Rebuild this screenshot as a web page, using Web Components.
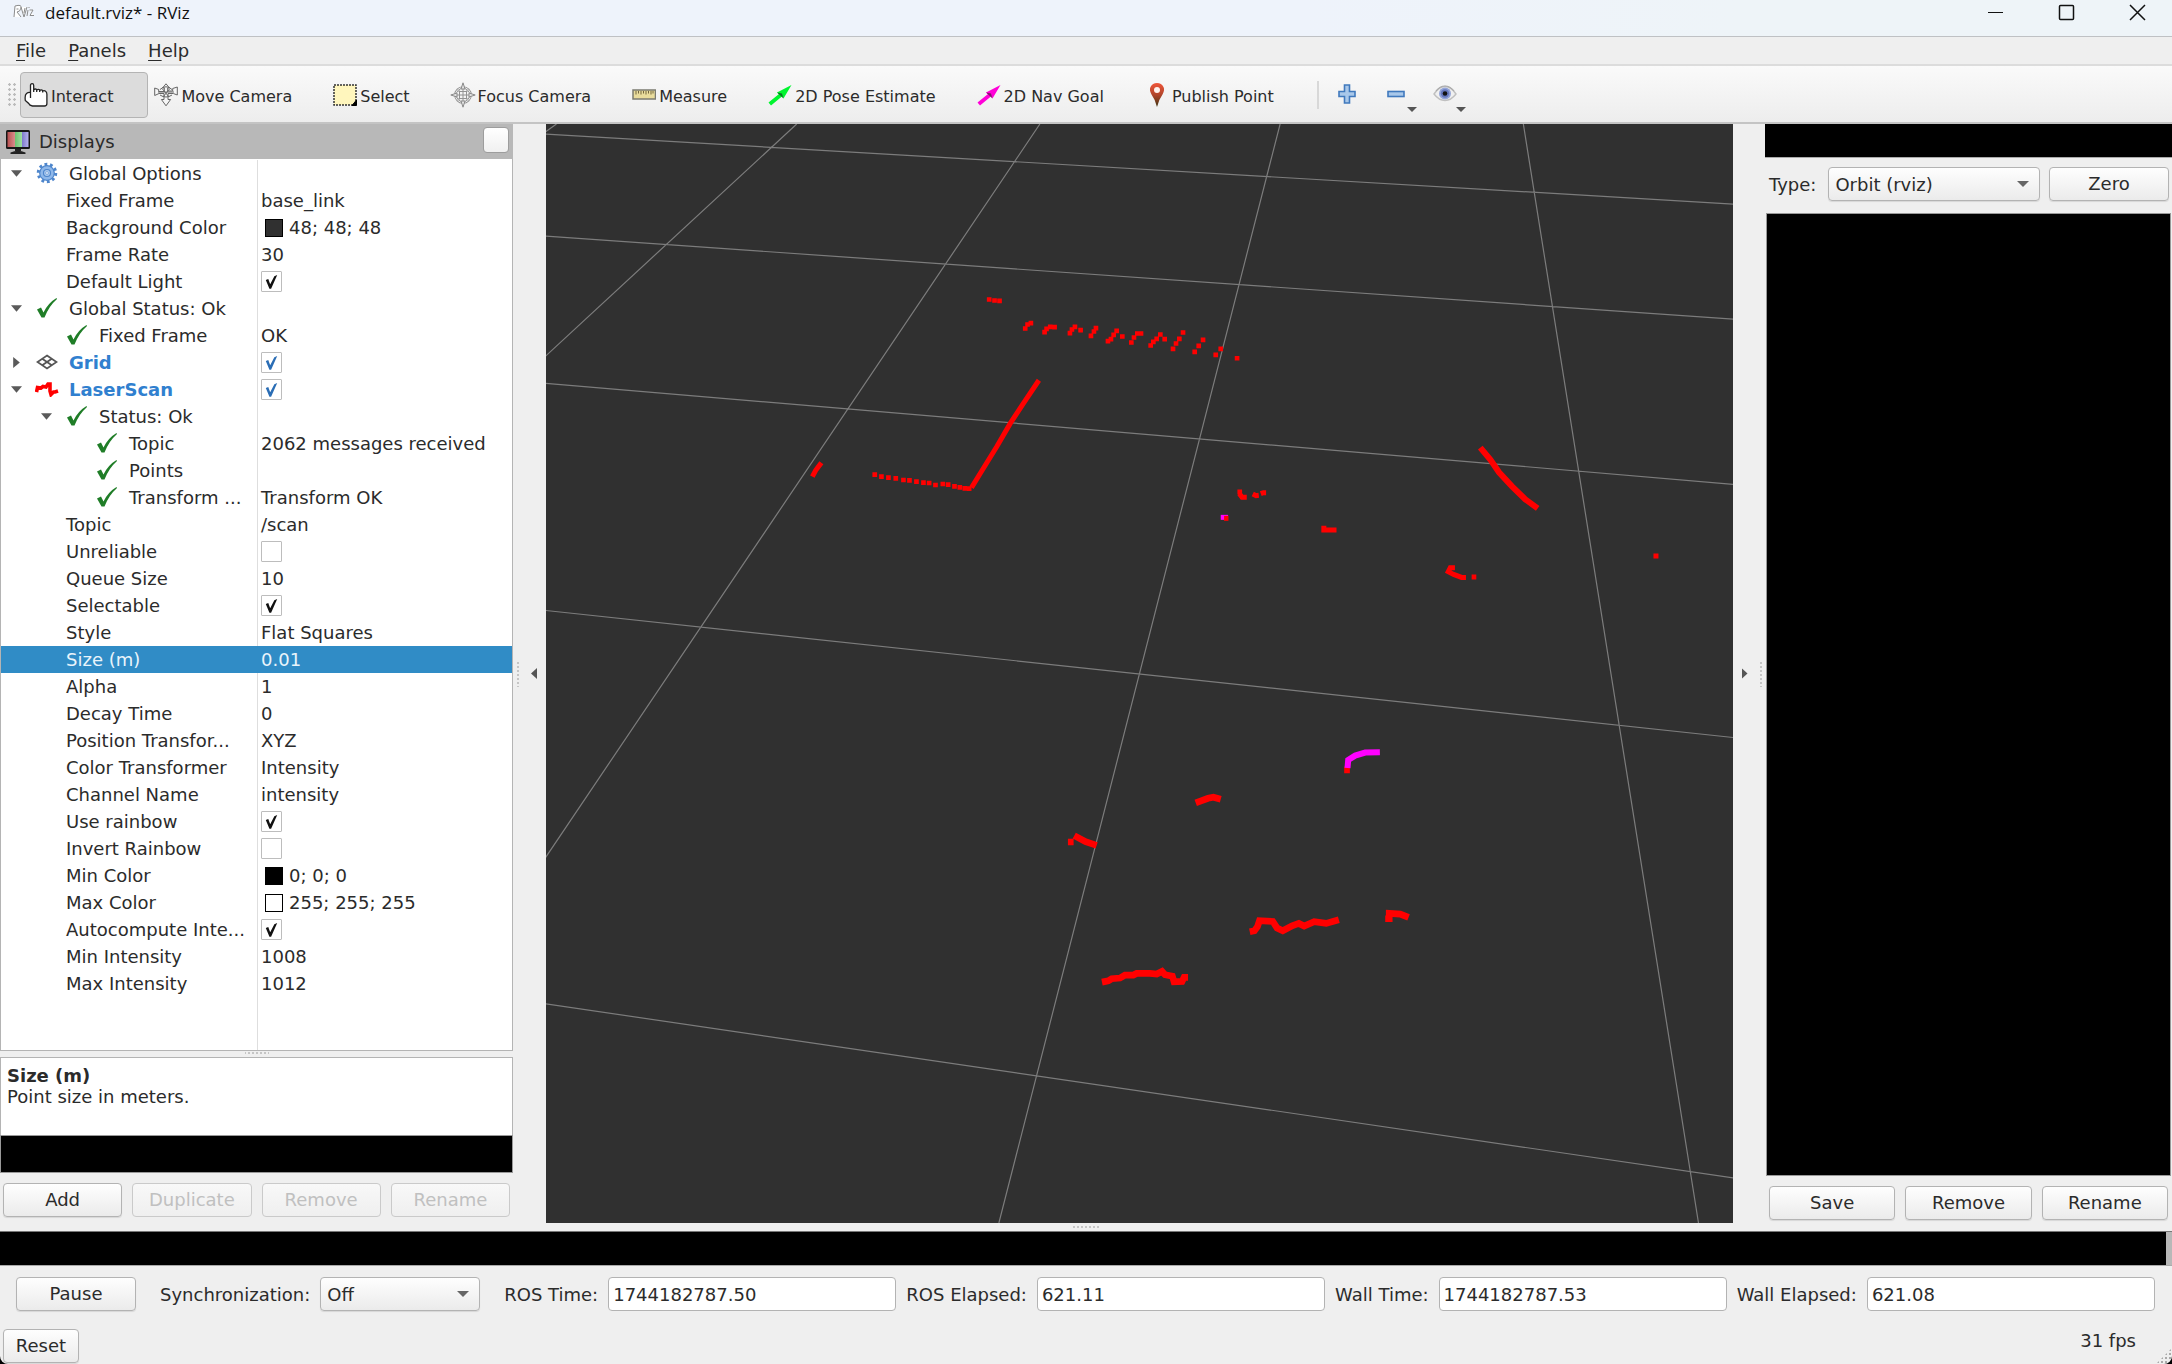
<!DOCTYPE html>
<html lang="en">
<head>
<meta charset="utf-8">
<title>default.rviz* - RViz</title>
<style>
  html, body { margin: 0; height: 100%; background: #000; }
  body { font: 18px/27px "DejaVu Sans", sans-serif; color: #2b2b2b; }
</style>
</head>
<body>
<rviz-app></rviz-app>

<script>
const BASE = `
  *, *::before, *::after { box-sizing: border-box; }
  svg { display: block; flex: none; }
  button, input, select { font: inherit; color: inherit; margin: 0; }
`;

function define(name, css, html, setup) {
  customElements.define(name, class extends HTMLElement {
    constructor() {
      super();
      const root = this.attachShadow({ mode: 'open' });
      root.innerHTML = `<style>${BASE}${css}</style>${typeof html === 'function' ? html(this) : html}`;
      if (setup) setup(root, this);
    }
  });
}

const ICONS = {
  interact: `<svg width="24" height="24" viewBox="0 0 24 24"><path d="M6.500 15V2.500q0-1.800 1.600-1.800t1.600 1.800V9V6.800q1.400-1.500 3-.3V9V7q1.500-1.300 3-.2V9V7.500q1.600-1.200 3 0V9.500V8q1.500-1 2.900.2q1.300 1 1.300 3V20.500q0 2.500-2.500 2.500H8.500Q5.500 22.500 4.700 20.500L1.300 17.500Q.6 12 2.500 10.500T6.500 9.500" fill="#fff" stroke="#222" stroke-width="1.300"/></svg>`,
  move: `<svg width="24" height="24" viewBox="0 0 24 24" fill="#f6f6f6" stroke="#666" stroke-width="1"><path d="M12 .8 15.500 5h-1.800v3h5V5.500L23.300 4v8l-4-1.500H14v6h2.600L12 22.800 7.400 16.500H10v-6H5L.7 12.500V5l4 1.500v2h5.600V5H8.500z"/><path d="M6 6.500Q12 1 18 6.500M6 12q6 4 12 0M8.500 6 15 14M15.500 6 9 14M4 9h16" fill="none"/></svg>`,
  select: `<svg width="24" height="22" viewBox="0 0 24 22"><rect x="1" y="1" width="22" height="20" fill="#fff6bd" stroke="#333" stroke-width="1.500" stroke-dasharray="2 1"/><path d="M23.500 16v5.500H19z" fill="#000" stroke="#000"/></svg>`,
  focus: `<svg width="26" height="26" viewBox="0 0 26 26"><g fill="none" stroke="#929292"><circle cx="13" cy="13" r="7.500" stroke-width="2.600"/><circle cx="13" cy="13" r="7.500" stroke="#ededed" stroke-width="1"/><path d="M13 7v12M7 13h12M9.500 8.500v9M16.500 8.500v9M8.500 9.500h9M8.500 16.500h9"/></g><g fill="#e2e2e2" stroke="#8a8a8a"><path d="M13 .8 15 7h-4zM13 25.200 15 19h-4zM.8 13 7 11v4zM25.200 13 19 11v4z"/></g></svg>`,
  measure: `<svg width="24" height="22" viewBox="0 0 24 22"><rect x="1" y="6" width="22.500" height="9" fill="#e9dc9c" stroke="#7b7b70" stroke-width="1.500"/><path d="M4 7v3.500M6.500 7v2.500M9 7v3.500M11.500 7v2.500M14 7v3.500M16.500 7v2.500M19 7v3.500M21 7v2.500" stroke="#73663c"/></svg>`,
  pose: `<svg width="24" height="22" viewBox="0 0 24 22"><path d="M.500 18.500 11 10 9 8.500 23.500 1 15.500 14.500 14.500 12 3 21.500z" fill="#00f52f"/><path d="M9 8.500 15.500 14.500 14 9.500z" fill="#087a20"/></svg>`,
  nav: `<svg width="24" height="22" viewBox="0 0 24 22"><path d="M.500 18.500 11 10 9 8.500 23.500 1 15.500 14.500 14.500 12 3 21.500z" fill="#ff00d8"/><path d="M9 8.500 15.500 14.500 14 9.500z" fill="#85126f"/></svg>`,
  publish: `<svg width="24" height="26" viewBox="0 0 24 26"><defs><linearGradient id="p" x2="0" y2="1"><stop offset="0" stop-color="#f0563a"/><stop offset=".5" stop-color="#b0452b"/><stop offset="1" stop-color="#3c3210"/></linearGradient></defs><path d="M12 25Q10.500 18 6.500 12.500Q4 8 5.500 5Q7.500 1 12 1t6.500 4Q20 8 17.500 12.500Q13.500 18 12 25z" fill="url(#p)"/><circle cx="12" cy="8" r="3" fill="#fff3ee"/></svg>`,
  plus: `<svg width="18" height="20" viewBox="0 0 18 20"><path d="M6.500 1h5v6.500H17v5h-5.500V19h-5v-6.500H1v-5h5.500z" fill="#a9c8ea" stroke="#4079bd" stroke-width="1.600"/></svg>`,
  minus: `<svg width="18" height="20" viewBox="0 0 18 20"><rect x="1" y="7.500" width="16" height="5" fill="#a9c8ea" stroke="#4079bd" stroke-width="1.600"/></svg>`,
  eye: `<svg width="24" height="18" viewBox="0 0 24 18"><path d="M1 9Q6 1.500 12 1.500T23 9Q18 15.500 12 15.500T1 9z" fill="#f0f0f0" stroke="#c0c0c0" stroke-width="1.400"/><path d="M3 6Q7 1 12 1t9 5" fill="none" stroke="#aaa" stroke-width="1.200"/><circle cx="12" cy="8.500" r="6" fill="#93a4d8"/><circle cx="12" cy="8.500" r="4.200" fill="#6577bd"/><circle cx="12" cy="8.500" r="2.300" fill="#111"/></svg>`,
  displays: `<svg width="26" height="26" viewBox="0 0 26 26"><defs><linearGradient id="r"><stop offset="0" stop-color="#b95050"/><stop offset="1" stop-color="#d98d8d"/></linearGradient><linearGradient id="g"><stop offset="0" stop-color="#6cc070"/><stop offset="1" stop-color="#a0e0a0"/></linearGradient><linearGradient id="b"><stop offset="0" stop-color="#7f7acb"/><stop offset="1" stop-color="#b5b2ee"/></linearGradient></defs><rect x="1" y="1" width="24" height="19" rx="1.500" fill="#171717"/><path fill="url(#r)" d="M2.500 3h7.500v15H2.500z"/><path fill="url(#g)" d="M10 3h7v15h-7z"/><path fill="url(#b)" d="M17 3h6.500v15H17z"/><path d="M10 20h6v2h-6zM5.500 23.500Q13 20 20.500 23.500V25H5.500z" fill="#222"/></svg>`,
  gear: `<svg width="22" height="22" viewBox="0 0 22 22"><circle cx="11" cy="11" r="8.500" fill="none" stroke="#4e86cc" stroke-width="3.500" stroke-dasharray="2.700 2.640"/><circle cx="11" cy="11" r="7.300" fill="#8fb8ea" stroke="#4e86cc" stroke-width="1.200"/><circle cx="11" cy="11" r="3.500" fill="#a9c8ee" stroke="#4e86cc" stroke-width="1.200"/><circle cx="11" cy="11" r="1.400" fill="#f4f8ff" stroke="#4e86cc" stroke-width=".6"/></svg>`,
  ok: `<svg width="22" height="22" viewBox="0 0 22 22"><path d="M1 12.500 5 10.500 7.500 15.500Q12 6 20.500 1L21 2Q13 9 8.500 20.500H5.500z" fill="#1f7d27"/></svg>`,
  grid: `<svg width="22" height="16" viewBox="0 0 22 16"><path d="M11 1.500 20.500 8 11 14.500 1.500 8zM6.200 4.800l9.600 6.500M15.800 4.800l-9.600 6.500" fill="none" stroke="#555" stroke-width="1.800"/></svg>`,
  laser: `<svg width="24" height="16" viewBox="0 0 24 16"><path d="M1.500 11 2.500 6.500 6 7 8 5.500 11 6 13 3 15 3V10L16 13.500 18.500 11 20 11 23 10" fill="none" stroke="#f00" stroke-width="3.600"/></svg>`
};

/* Window title bar */
define('rviz-titlebar', `
  :host { display: flex; align-items: center; height: 37px; padding: 0 26px 12px 13px; gap: 10px;
    background: linear-gradient(90deg, #eef3fb 60%, #eef4f8 80%); border-bottom: 1px solid #bfc1c4;
    font-family: "Open Sans", sans-serif; font-size: 17px; color: #111; }
  .name { flex: 1; }
  .controls { display: flex; gap: 54px; }
  button { border: 0; padding: 0; width: 17px; height: 17px; background: none; }
`, `
  <svg width="22" height="16" viewBox="0 0 22 16" fill="#fff" stroke="#8c8c8c" stroke-width="1" aria-hidden="true">
    <path d="M1 13 2 2Q9 0 8 4T4 8L8 13M3.500 5h2M8 3 11 13 14 3M12 4 11 9M15 6 14 12M16 3v1M16.500 6H20L17 11.500H21"/>
  </svg>
  <span class="name">default.rviz* - RViz</span>
  <span class="controls">
    <button aria-label="Minimize"><svg width="17" height="17"><path d="M1 8.500h15" stroke="#111" stroke-width="1"/></svg></button>
    <button aria-label="Maximize"><svg width="17" height="17"><rect x="1.500" y="1.500" width="14" height="14" rx="1" fill="none" stroke="#111" stroke-width="1.500"/></svg></button>
    <button aria-label="Close"><svg width="17" height="17"><path d="m1 1 15 15M16 1 1 16" stroke="#111" stroke-width="1.500"/></svg></button>
  </span>
`);

/* Menu bar */
define('rviz-menubar', `
  :host { display: flex; align-items: center; height: 29px; padding-left: 16px; gap: 22px;
    background: #efefef; border-bottom: 2px solid #dcdcdc; }
  button { border: 0; background: none; padding: 0; line-height: 27px; }
  u { text-underline-offset: 3px; text-decoration-thickness: 1px; }
`, `<button><u>F</u>ile</button><button><u>P</u>anels</button><button><u>H</u>elp</button>`);

/* Tool button: icon plus slotted label */
define('tool-button', `
  :host { display: block; }
  button { display: flex; align-items: center; gap: 3px; height: 46px; padding: 0 34px 0 3px;
    border: 1px solid transparent; border-radius: 4px; background: none; white-space: nowrap; }
  :host([active]) button { background: #dcdcdc; border-color: #b4b4b4; }
  .icon { width: 24px; display: flex; justify-content: center; }
  .text { padding-top: 2px; }
`, host => `<button><span class="icon">${ICONS[host.getAttribute('icon')] || ''}</span><span class="text"><slot></slot></span></button>`);

/* Small icon-only tool with optional drop-down mark */
define('icon-button', `
  :host { display: block; }
  button { display: grid; place-items: center; position: relative; width: 34px; height: 46px; border: 0; padding: 0 0 2px; background: none; }
  :host([menu]) button::after { content: ""; position: absolute; right: -4px; bottom: 6px;
    border: 5px solid transparent; border-top-color: #555; border-bottom: 0; }
`, host => `<button aria-label="${host.getAttribute('label')}">${ICONS[host.getAttribute('icon')]}</button>`);

define('rviz-toolbar', `
  :host { display: flex; align-items: center; height: 58px; padding: 2px 0 0 7px; gap: 2px; font-size: 16px;
    background: linear-gradient(#fafafa, #ededed); border-bottom: 2px solid #c4c4c4; }
  .grip { width: 9px; height: 26px; margin-right: 2px; background: radial-gradient(circle, #bbb 1px, transparent 1.500px) 0 0/5px 5px; }
  .sep { width: 2px; height: 28px; background: #d8d8d8; margin: 0 9px 0 6px; }
  .icons { display: flex; gap: 15px; }
`, `
  <span class="grip"></span>
  <tool-button icon="interact" active>Interact</tool-button>
  <tool-button icon="move">Move Camera</tool-button>
  <tool-button icon="select">Select</tool-button>
  <tool-button icon="focus">Focus Camera</tool-button>
  <tool-button icon="measure">Measure</tool-button>
  <tool-button icon="pose">2D Pose Estimate</tool-button>
  <tool-button icon="nav">2D Nav Goal</tool-button>
  <tool-button icon="publish">Publish Point</tool-button>
  <span class="sep"></span>
  <span class="icons">
    <icon-button icon="plus" label="Add tool"></icon-button>
    <icon-button icon="minus" label="Remove tool" menu></icon-button>
    <icon-button icon="eye" label="Visibility" menu></icon-button>
  </span>
`);

/* Push button */
define('push-button', `
  :host { display: block; }
  button { width: 100%; height: 34px; padding: 0 4px; border: 1px solid #b3b3b3; border-radius: 4px;
    background: linear-gradient(#fefefe, #ebebeb); box-shadow: 0 1px 1px #0000001a; line-height: 30px; white-space: nowrap; }
  button:disabled { color: #c0c0c0; border-color: #cacaca; background: linear-gradient(#f8f8f8, #efefef); box-shadow: none; }
`, host => `<button ${host.hasAttribute('disabled') ? 'disabled' : ''}><slot></slot></button>`);

/* Labelled drop-down */
define('combo-box', `
  :host { display: flex; align-items: center; gap: 10px; white-space: nowrap; }
  .box { display: grid; flex: 1; width: var(--combo-width, auto); }
  .box > * { grid-area: 1 / 1; }
  select { appearance: none; width: 100%; height: 34px; padding: 0 30px 0 6px; border: 1px solid #b3b3b3; border-radius: 4px;
    background: linear-gradient(#fefefe, #ebebeb); box-shadow: 0 1px 1px #0000001a; }
  .arrow { place-self: center end; margin-right: 11px; border: 6px solid transparent; border-top-color: #666; border-bottom: 0; pointer-events: none; }
`, host => `<label for="s">${host.getAttribute('label')}</label>
  <span class="box"><select id="s"><option>${host.getAttribute('value')}</option></select><span class="arrow"></span></span>`);

/* Labelled time read-out */
define('time-field', `
  :host { display: flex; align-items: center; gap: 10px; white-space: nowrap; }
  input { flex: 1; min-width: 0; width: 100%; height: 34px; padding: 0 4px; border: 1px solid #b3b3b3; border-radius: 4px; background: #fff; }
`, host => `<label for="t">${host.getAttribute('label')}</label><input id="t" value="${host.getAttribute('value')}">`);

/* Property tree. Row: [indent level, arrow, icon, name, value, options] */
const ROWS = [
  [0, 'down', 'gear', 'Global Options', ''],
  [1, '', '', 'Fixed Frame', 'base_link'],
  [1, '', '', 'Background Color', { color: '#303030', text: '48; 48; 48' }],
  [1, '', '', 'Frame Rate', '30'],
  [1, '', '', 'Default Light', true],
  [0, 'down', 'ok', 'Global Status: Ok', ''],
  [1, '', 'ok', 'Fixed Frame', 'OK'],
  [0, 'right', 'grid', 'Grid', true, 'display'],
  [0, 'down', 'laser', 'LaserScan', true, 'display'],
  [1, 'down', 'ok', 'Status: Ok', ''],
  [2, '', 'ok', 'Topic', '2062 messages received'],
  [2, '', 'ok', 'Points', ''],
  [2, '', 'ok', 'Transform ...', 'Transform OK'],
  [1, '', '', 'Topic', '/scan'],
  [1, '', '', 'Unreliable', false],
  [1, '', '', 'Queue Size', '10'],
  [1, '', '', 'Selectable', true],
  [1, '', '', 'Style', 'Flat Squares'],
  [1, '', '', 'Size (m)', '0.01', 'selected'],
  [1, '', '', 'Alpha', '1'],
  [1, '', '', 'Decay Time', '0'],
  [1, '', '', 'Position Transfor...', 'XYZ'],
  [1, '', '', 'Color Transformer', 'Intensity'],
  [1, '', '', 'Channel Name', 'intensity'],
  [1, '', '', 'Use rainbow', true],
  [1, '', '', 'Invert Rainbow', false],
  [1, '', '', 'Min Color', { color: '#000', text: '0; 0; 0' }],
  [1, '', '', 'Max Color', { color: '#fff', text: '255; 255; 255' }],
  [1, '', '', 'Autocompute Inte...', true],
  [1, '', '', 'Min Intensity', '1008'],
  [1, '', '', 'Max Intensity', '1012']
];

function rowHtml([level, arrow, icon, name, value, kind], i) {
  const isCheck = typeof value === 'boolean';
  const label = isCheck ? `<label for="c${i}">${name}</label>` : `<span>${name}</span>`;
  let cell = value;
  if (isCheck) cell = `<input type="checkbox" id="c${i}" ${value ? 'checked' : ''}>`;
  else if (value && value.color) cell = `<span class="swatch" style="background:${value.color}"></span>${value.text}`;
  return `<tr class="${kind || ''}"><td><div class="name l${level}"><i class="arrow ${arrow}"></i>${icon ? `<i class="icon">${ICONS[icon]}</i>` : ''}${label}</div></td>
    <td class="val"><div>${cell}</div></td></tr>`;
}

define('property-tree', `
  :host { display: grid; grid-template-columns: 257px 1fr; min-height: 0; overflow: hidden; background: #fff;
    border: 1px solid #b4b4b4; border-top: 0; }
  table { grid-area: 1 / 1 / 2 / 3; align-self: start; width: 100%; border-collapse: collapse; table-layout: fixed; }
  .rule { grid-area: 1 / 1 / 2 / 2; border-right: 1px solid #dedede; }
  col:first-child { width: 257px; }
  td { padding: 0; height: 27px; }
  td > div { display: flex; align-items: center; height: 27px; overflow: hidden; white-space: nowrap; }
  .l1 { padding-left: 30px; }
  .l2 { padding-left: 60px; }
  .arrow { flex: none; width: 11px; height: 11px; margin: 0 14px 0 10px; }
  .down { background: #5a5a5a; clip-path: polygon(0 20%, 100% 20%, 50% 80%); }
  .right { background: #5a5a5a; clip-path: polygon(20% 0, 80% 50%, 20% 100%); }
  .icon { flex: none; width: 22px; margin-right: 11px; padding-bottom: 2px; display: flex; justify-content: center; }
  .val > div { padding-left: 3px; }
  .swatch { width: 18px; height: 18px; border: 1px solid #000; margin: 0 6px 0 4px; }
  input { appearance: none; width: 21px; height: 21px; border: 1px solid #bdbdbd; border-radius: 1px; background: #fff; color: #111; }
  input:checked::before { content: ""; display: block; width: 19px; height: 19px; background: currentColor;
    clip-path: polygon(20% 42%, 33% 37%, 43% 64%, 65% 22%, 80% 16%, 48% 88%, 39% 88%); }
  .display label { color: #3080cf; font-weight: bold; }
  .display input { color: #2a6db5; }
  .selected { background: #308cc6; color: #e9f4fb; }
`, `<span class="rule"></span><table><colgroup><col><col></colgroup><tbody>${ROWS.map(rowHtml).join('')}</tbody></table>`);

/* Displays panel */
define('displays-panel', `
  :host { display: flex; flex-direction: column; min-height: 0; padding-bottom: 6px; }
  header { display: flex; align-items: center; height: 35px; padding: 0 4px 0 5px; gap: 8px; background: #b8b8b8; }
  header span { flex: 1; }
  header button { width: 26px; height: 26px; border: 1px solid #9d9d9d; border-radius: 4px; background: linear-gradient(#fff, #f0f0f0); margin-bottom: 3px; }
  property-tree { flex: 1; padding-top: 1px; }
  .grip { height: 6px; background: radial-gradient(circle, #c5c5c5 1px, transparent 1.500px) top/4px 4px repeat-x; width: 24px; align-self: center; }
  .help { height: 78px; padding: 7px 6px; background: #fff; border: 1px solid #b4b4b4; border-bottom: 0; line-height: 21px; }
  .help b, .help span { display: block; }
  .blank { height: 38px; background: #000; border: 1px solid #999; }
  .buttons { display: flex; gap: 10px; padding: 10px 3px 0; }
  .buttons push-button { flex: 1; }
`, `
  <header>${ICONS.displays}<span>Displays</span><button aria-label="Close panel"></button></header>
  <property-tree></property-tree>
  <div class="grip"></div>
  <div class="help"><b>Size (m)</b><span>Point size in meters.</span></div>
  <div class="blank"></div>
  <div class="buttons">
    <push-button>Add</push-button><push-button disabled>Duplicate</push-button>
    <push-button disabled>Remove</push-button><push-button disabled>Rename</push-button>
  </div>
`);

/* Collapsible edge between a side panel and the 3D view */
define('side-splitter', `
  :host { display: flex; align-items: center; justify-content: center; gap: 11px; padding-right: 6px; background: #efefef; }
  :host([side=right]) { flex-direction: row-reverse; padding: 0 0 0 6px; }
  .dots { width: 4px; height: 26px; background: radial-gradient(circle, #c5c5c5 1px, transparent 1.500px) 0 0/4px 4px; }
  .arrow { width: 6px; height: 11px; background: #555; clip-path: polygon(100% 0, 0 50%, 100% 100%); }
  :host([side=right]) .arrow { clip-path: polygon(0 0, 100% 50%, 0 100%); }
`, `<span class="dots"></span><span class="arrow"></span>`);

/* 3D view: ground grid and laser points */
const dots = list => list.map(([x, y]) => `M${x - 7} ${y - 7}h14v14h-14z`).join('');
define('scene-view', `
  :host { display: block; min-width: 0; min-height: 0; background: #303030; overflow: hidden; }
  svg { width: 100%; height: 100%; }
`, `
  <svg viewBox="546 124 1187 1098" preserveAspectRatio="xMidYMid slice" role="img" aria-label="Laser scan">
    <path fill="none" stroke="#7c7c7c" stroke-width="1.200" d="M546 134 1733 204M546 236 1733 319M546 383 1733 484M546 610 1733 737M546 1003 1733 1177
      M557 124 546 132M797 124 546 356M1040 124 546 857M1280 124 999 1222M1523 124 1698 1222"/>
    <g transform="translate(780 270) scale(.33333)" fill="#f00">
      <path d="${dots([[628,88],[644,91],[659,92],[736,175],[743,163],[753,159],[794,186],[800,176],[811,170],[824,171],[870,189],[876,178],[885,170],[902,180],[933,197],[942,184],[948,174],[984,213],[993,207],[1001,194],[1010,182],[1027,199],[1054,217],[1062,202],[1072,190],[1083,190],[1112,226],[1120,215],[1130,206],[1141,193],[1154,207],[1179,236],[1188,220],[1198,206],[1209,187],[1244,245],[1256,227],[1269,209],[1307,254],[1322,236],[1371,264],
        [285,613],[305,619],[326,622],[348,624],[371,629],[389,630],[410,634],[431,637],[448,638],[467,644],[489,641],[505,643],[524,648],[540,651],[555,654],[568,655]])}"/>
      <path fill="none" stroke="#f00" stroke-width="15" d="M575 652 607 600 650 530 692 458 730 400 777 330M98 619 108 600 125 577"/>
    </g>
    <g transform="translate(1200 430) scale(.33333)" fill="none" stroke="#f00" stroke-width="15">
      <path d="M112 185h14M118 190l8 11h14M158 191l10 5 8-1M182 190l8-3h8M371 286v13h38M764 412h-14l-6 12 16 8 24 9h13M814 440h14M1359 377h15"/>
      <path stroke-width="18" d="M840 52 870 88 896 126 935 168 975 207 1012 234"/>
      <path stroke="#f0f" d="M62 261h22"/><path d="M72 264h13"/>
    </g>
    <g transform="translate(1040 730) scale(.33333)" fill="none" stroke="#f00" stroke-width="20">
      <path d="M467 217 483 211 504 203 520 200 542 206M84 334h17M103 315 137 333 170 344M629 603 643 600 652 588 658 570 698 572 711 592 728 600 756 585 776 578 792 586 822 573 858 578 896 567M1035 564h12V548L1080 550 1105 560M186 754 205 750 215 744 240 742 255 733 280 733 290 728 330 728 350 730 366 722 375 732 397 736 402 753 426 752 432 740h12"/>
      <path d="M912 118h17"/>
      <path stroke="#f0f" stroke-width="18" d="M922 112 924 88 945 75 975 66 1019 65"/>
    </g>
  </svg>
`);

/* Views panel */
define('views-panel', `
  :host { display: flex; flex-direction: column; padding-bottom: 2px; }
  .title { height: 34px; background: #000; border-bottom: 1px solid #aaa; }
  .row { display: flex; gap: 9px; padding: 9px 3px 10px 4px; }
  combo-box { flex: 7; gap: 12px; }
  .row push-button { flex: none; width: 120px; }
  .list { flex: 1; background: #000; border: 1px solid #999; margin: 2px 1px 0; }
  .buttons { display: flex; gap: 10px; padding: 10px 4px 1px; }
  .buttons push-button { flex: 1; }
`, `
  <div class="title"></div>
  <div class="row"><combo-box label="Type:" value="Orbit (rviz)"></combo-box><push-button>Zero</push-button></div>
  <div class="list"></div>
  <div class="buttons"><push-button>Save</push-button><push-button>Remove</push-button><push-button>Rename</push-button></div>
`);

/* Time panel */
define('time-panel', `
  :host { display: block; }
  .title { display: flex; height: 35px; background: #b8b8b8; border-bottom: 1px solid #aaa; border-top: 1px solid #777; }
  .title span { flex: 1; background: #000; margin-right: 6px; }
  .row { display: flex; align-items: center; gap: 10px; padding: 11px 17px 11px 16px; }
  push-button { width: 120px; }
  combo-box { --combo-width: 160px; margin: 0 14px; }
  time-field { flex: 1 1 auto; }
`, `
  <div class="title"><span></span></div>
  <div class="row">
    <push-button>Pause</push-button>
    <combo-box label="Synchronization:" value="Off"></combo-box>
    <time-field label="ROS Time:" value="1744182787.50"></time-field>
    <time-field label="ROS Elapsed:" value="621.11"></time-field>
    <time-field label="Wall Time:" value="1744182787.53"></time-field>
    <time-field label="Wall Elapsed:" value="621.08"></time-field>
  </div>
`);

/* Status bar */
define('status-bar', `
  :host { display: flex; align-items: start; justify-content: space-between; height: 42px; padding: 5px 0 0 3px; }
  push-button { width: 76px; margin-top: 2px; }
  .right { display: flex; align-self: stretch; gap: 20px; }
  .size { align-self: end; width: 16px; height: 16px; background: radial-gradient(circle, #aaa 1px, transparent 1.500px) 0 0/4px 4px; clip-path: polygon(100% 0, 100% 100%, 0 100%); }
`, `<push-button>Reset</push-button><span class="right"><span>31 fps</span><span class="size"></span></span>`);

define('rviz-app', `
  :host { display: flex; flex-direction: column; height: 100vh; background: #efefef; border-radius: 0 0 8px 8px; overflow: hidden; }
  main { flex: 1; min-height: 0; display: grid; grid-template-columns: 513px 33px minmax(0, 1fr) 32px 407px; grid-template-rows: minmax(0, 1fr); }
  .grip { height: 8px; width: 26px; align-self: center; background: radial-gradient(circle, #c5c5c5 1px, transparent 1.500px) center/4px 4px repeat-x; }
`, `
  <rviz-titlebar></rviz-titlebar>
  <rviz-menubar></rviz-menubar>
  <rviz-toolbar></rviz-toolbar>
  <main>
    <displays-panel></displays-panel>
    <side-splitter></side-splitter>
    <scene-view></scene-view>
    <side-splitter side="right"></side-splitter>
    <views-panel></views-panel>
  </main>
  <span class="grip"></span>
  <time-panel></time-panel>
  <status-bar></status-bar>
`);
</script>
</body>
</html>
